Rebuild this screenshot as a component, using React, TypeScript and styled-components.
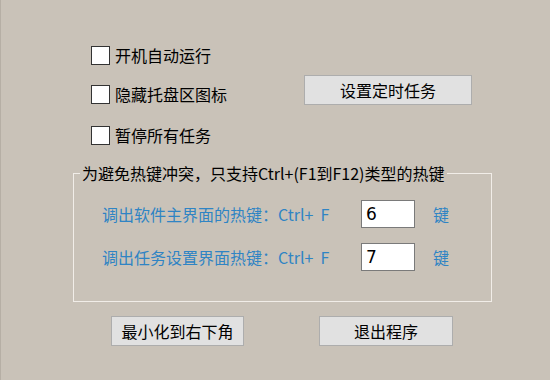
import styled, { createGlobalStyle } from "styled-components";

const GlobalStyle = createGlobalStyle`
  html, body {
    margin: 0;
    padding: 0;
    background: #c9c2b8;
  }
  * {
    box-sizing: border-box;
  }
`;

const cjk = `"Noto Sans CJK SC", "Noto Sans", sans-serif`;

const Window = styled.div`
  width: 550px;
  height: 380px;
  background: #c9c2b8;
  border-left: 1px solid #b6afa5;
  padding-top: 46px;
  font-family: ${cjk};
  font-size: 16px;
  color: #000;
  overflow: hidden;
`;

const TopSection = styled.div`
  display: flex;
`;

const CheckList = styled.div`
  display: flex;
  flex-direction: column;
  margin-left: 90px;
  width: 213px;
`;

const CheckRow = styled.label<{ $gap: number }>`
  display: flex;
  align-items: center;
  gap: 5px;
  height: 19px;
  margin-top: ${(p) => p.$gap}px;
  line-height: 19px;
  cursor: default;
`;

const Box = styled.span`
  width: 19px;
  height: 19px;
  background: #fff;
  border: 1px solid #333;
  flex-shrink: 0;
`;

const Button = styled.button<{ $width: number; $left: number }>`
  width: ${(p) => p.$width}px;
  height: 30px;
  margin-left: ${(p) => p.$left}px;
  background: #e1e1e1;
  border: 1px solid #adadad;
  font-family: ${cjk};
  font-size: 16px;
  color: #000;
  padding: 0;
  line-height: 28px;
`;

const RightColumn = styled.div`
  padding-top: 29px;
`;

const Group = styled.fieldset`
  margin: 19px 0 0 72px;
  width: 419px;
  height: 138px;
  padding: 0;
  border: 1px solid #f1ede8;
`;

const Legend = styled.legend`
  margin-left: 6px;
  padding: 0 2px;
  line-height: 18px;
  font-size: 16px;
`;

const HotkeyRow = styled.div<{ $gap: number }>`
  display: flex;
  align-items: center;
  height: 28px;
  margin-top: ${(p) => p.$gap}px;
  padding-left: 28px;
`;

const HotkeyLabel = styled.span`
  width: 259px;
  color: #2f84c4;
  white-space: pre;
`;

const KeyInput = styled.input`
  width: 54px;
  height: 28px;
  border: 1px solid #7a7a7a;
  background: #fff;
  padding: 0 0 0 4px;
  font-family: "DejaVu Sans", "Liberation Sans", sans-serif;
  font-size: 17px;
  color: #000;
  outline: none;
`;

const KeySuffix = styled.span`
  margin-left: 18px;
  color: #2f84c4;
`;

const BottomBar = styled.div`
  display: flex;
  margin-top: 14px;
`;

export default function App() {
  return (
    <Window>
      <GlobalStyle />
      <TopSection>
        <CheckList>
          <CheckRow $gap={0}>
            <Box />
            开机自动运行
          </CheckRow>
          <CheckRow $gap={20}>
            <Box />
            隐藏托盘区图标
          </CheckRow>
          <CheckRow $gap={22}>
            <Box />
            暂停所有任务
          </CheckRow>
        </CheckList>
        <RightColumn>
          <Button $width={168} $left={0}>
            设置定时任务
          </Button>
        </RightColumn>
      </TopSection>
      <Group>
        <Legend>为避免热键冲突，只支持Ctrl+(F1到F12)类型的热键</Legend>
        <HotkeyRow $gap={18}>
          <HotkeyLabel>{"调出软件主界面的热键：Ctrl+  F"}</HotkeyLabel>
          <KeyInput defaultValue="6" />
          <KeySuffix>键</KeySuffix>
        </HotkeyRow>
        <HotkeyRow $gap={15}>
          <HotkeyLabel>{"调出任务设置界面热键：Ctrl+  F"}</HotkeyLabel>
          <KeyInput defaultValue="7" />
          <KeySuffix>键</KeySuffix>
        </HotkeyRow>
      </Group>
      <BottomBar>
        <Button $width={133} $left={110}>
          最小化到右下角
        </Button>
        <Button $width={134} $left={75}>
          退出程序
        </Button>
      </BottomBar>
    </Window>
  );
}
